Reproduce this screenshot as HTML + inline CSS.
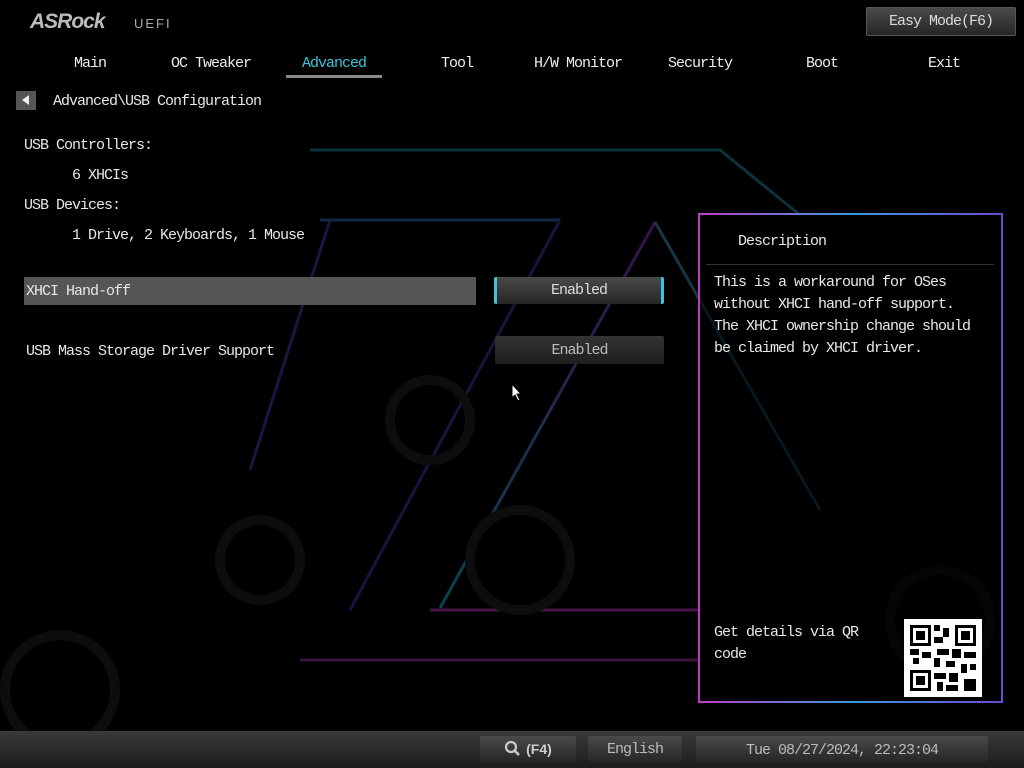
<!DOCTYPE html>
<html><head><meta charset="utf-8"><style>
*{margin:0;padding:0;box-sizing:border-box}
body{width:1024px;height:768px;background:#000;overflow:hidden;position:relative;font-family:"Liberation Mono","DejaVu Sans Mono",monospace;font-size:15px;letter-spacing:-1px;color:#e8e8e8}
.a{position:absolute;white-space:nowrap}
.tab{position:absolute;top:55px;width:100px;text-align:center;color:#eee}
.btn{position:absolute;background:linear-gradient(#4a4a4a,#262626);color:#ddd;text-align:center;border-radius:2px}
</style></head><body>
<svg class="a" style="left:0;top:0" width="1024" height="768">
<defs><linearGradient id="g1" x1="0" x2="1"><stop offset="0" stop-color="#1a8fb0"/><stop offset="1" stop-color="#7a2aa0"/></linearGradient></defs>
<g fill="none" stroke-width="3" opacity="0.45">
<path d="M310 150 L720 150 L800 215" stroke="#1d6f86"/>
<path d="M330 220 L250 470" stroke="#4a2a90"/>
<path d="M655 222 L440 608" stroke="url(#g1)"/>
<path d="M655 222 L820 510" stroke="#2a7a9a"/>
<path d="M430 610 L700 610" stroke="#a02a9a"/>
<path d="M300 660 L700 660" stroke="#7a2a8a"/>
<path d="M320 220 L560 220" stroke="#2a5aa0"/>
<path d="M560 220 L350 610" stroke="#3a2a8a"/>
</g>
<g fill="none" stroke="#0d0d0d" stroke-width="10">
<circle cx="430" cy="420" r="40"/><circle cx="520" cy="560" r="50"/><circle cx="60" cy="690" r="55"/><circle cx="940" cy="620" r="50"/><circle cx="260" cy="560" r="40"/>
</g>
</svg>
<div class="a" style="left:30px;top:10px;font-family:'Liberation Sans',sans-serif;font-weight:bold;font-style:italic;font-size:21px;letter-spacing:-1px;color:#bbb">ASRock</div>
<div class="a" style="left:134px;top:16px;font-family:'Liberation Sans',sans-serif;font-size:13px;letter-spacing:2px;color:#aaa">UEFI</div>
<div class="btn" style="left:866px;top:7px;width:150px;height:29px;line-height:27px;border:1px solid #555">Easy Mode(F6)</div>
<div class="tab" style="left:40px">Main</div>
<div class="tab" style="left:161px">OC Tweaker</div>
<div class="tab" style="left:284px;color:#3cc4d8">Advanced</div>
<div class="a" style="left:286px;top:75px;width:96px;height:3px;background:#888"></div>
<div class="tab" style="left:407px">Tool</div>
<div class="tab" style="left:528px">H/W Monitor</div>
<div class="tab" style="left:650px">Security</div>
<div class="tab" style="left:772px">Boot</div>
<div class="tab" style="left:894px">Exit</div>
<div class="a" style="left:16px;top:91px;width:20px;height:19px;background:#555"></div>
<div class="a" style="left:22px;top:95px;width:0;height:0;border-top:5px solid transparent;border-bottom:5px solid transparent;border-right:7px solid #eee"></div>
<div class="a" style="left:53px;top:93px">Advanced\USB Configuration</div>
<div class="a" style="left:24px;top:137px">USB Controllers:</div>
<div class="a" style="left:72px;top:167px">6 XHCIs</div>
<div class="a" style="left:24px;top:197px">USB Devices:</div>
<div class="a" style="left:72px;top:227px">1 Drive, 2 Keyboards, 1 Mouse</div>
<div class="a" style="left:24px;top:277px;width:452px;height:28px;background:#555"></div>
<div class="a" style="left:26px;top:283px">XHCI Hand-off</div>
<div class="btn" style="left:494px;top:277px;width:170px;height:27px;line-height:28px;border-left:3px solid #3cc4d8;border-right:3px solid #3cc4d8">Enabled</div>
<div class="a" style="left:26px;top:343px">USB Mass Storage Driver Support</div>
<div class="btn" style="left:495px;top:336px;width:169px;height:28px;line-height:29px;background:linear-gradient(#333,#1e1e1e);color:#bbb">Enabled</div>
<div class="a" style="left:698px;top:213px;width:305px;height:490px;border:2px solid;border-image:linear-gradient(90deg,#c03cc0,#3c9ad8,#6a4ad0) 1;background:rgba(0,0,0,0.55)"></div>
<div class="a" style="left:738px;top:233px">Description</div>
<div class="a" style="left:706px;top:264px;width:288px;height:1px;background:#333"></div>
<div class="a" style="left:714px;top:272px;line-height:22px">This is a workaround for OSes<br>without XHCI hand-off support.<br>The XHCI ownership change should<br>be claimed by XHCI driver.</div>
<div class="a" style="left:714px;top:622px;line-height:22px">Get details via QR<br>code</div>
<svg class="a" style="left:904px;top:619px" width="78" height="78" viewBox="0 0 26 26">
<rect width="26" height="26" fill="#fff"/>
<g fill="#000">
<path d="M2 2h7v7H2zM17 2h7v7h-7zM2 17h7v7H2z"/>
</g>
<g fill="#fff"><path d="M3 3h5v5H3zM18 3h5v5h-5zM3 18h5v5H3z"/></g>
<g fill="#000"><path d="M4 4h3v3H4zM19 4h3v3h-3zM4 19h3v3H4z"/>
<path d="M10 2h2v2h-2zM13 3h2v3h-2zM10 6h3v2h-3zM11 10h4v2h-4zM2 10h3v2H2zM6 11h3v2H6zM16 10h3v3h-3zM20 11h4v2h-4zM10 13h2v3h-2zM14 14h3v2h-3zM19 15h2v3h-2zM22 15h2v2h-2zM10 18h4v2h-4zM15 18h3v3h-3zM11 21h2v3h-2zM14 22h4v2h-4zM20 20h4v4h-4zM3 13h2v2H3z"/></g>
</svg>
<div class="a" style="left:0;top:731px;width:1024px;height:37px;background:linear-gradient(#3a3a3a,#1c1c1c)"></div>
<div class="btn" style="left:480px;top:736px;width:96px;height:26px;line-height:26px;font-family:'Liberation Sans',sans-serif;font-weight:bold;font-size:14px;letter-spacing:0;color:#ccc"><svg width="18" height="18" viewBox="0 0 18 18" style="vertical-align:-4px"><circle cx="7" cy="7" r="5" fill="none" stroke="#ccc" stroke-width="2.2"/><path d="M10.5 10.5 L15 15" stroke="#ccc" stroke-width="2.5"/></svg> (F4)</div>
<div class="btn" style="left:588px;top:736px;width:94px;height:26px;line-height:28px;color:#bbb">English</div>
<div class="btn" style="left:696px;top:736px;width:292px;height:26px;line-height:30px;color:#bbb">Tue 08/27/2024, 22:23:04</div>
<svg class="a" style="left:511px;top:383px" width="12" height="18"><path d="M1 1v14l3-3 3 6 2-1-3-6h4z" fill="#fff" stroke="#000"/></svg>
</body></html>
